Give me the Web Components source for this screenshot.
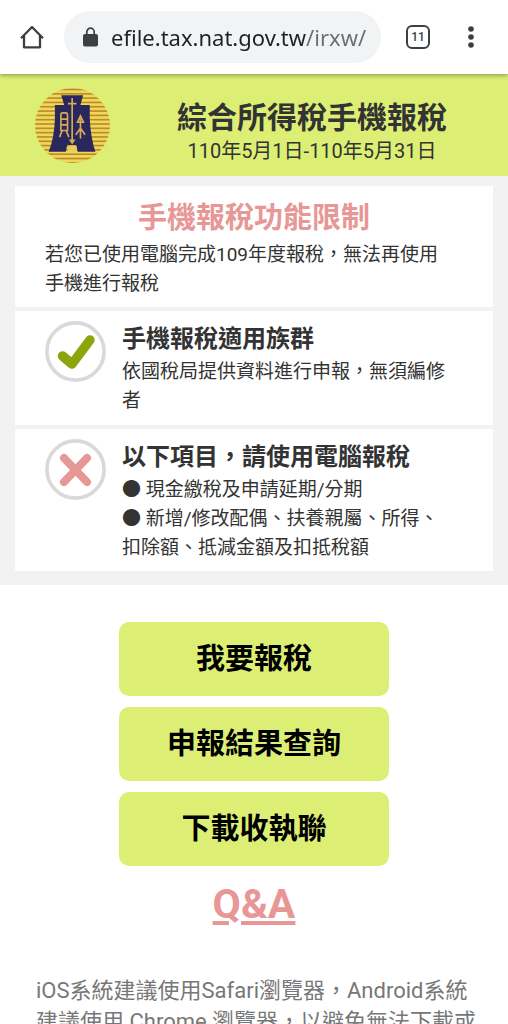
<!DOCTYPE html>
<html lang="zh-Hant-TW">
<head>
<meta charset="utf-8">
<meta name="viewport" content="width=device-width, initial-scale=1">
<title>綜合所得稅手機報稅</title>
<style>
  :root {
    --color-lime: #dcef74;
    --color-pink: #e79796;
    --color-text: #333;
    --color-grey: #f2f2f2;
  }
  body {
    margin: 0;
    background: #fff;
    color: var(--color-text);
    font-family: Roboto, "Noto Sans CJK TC", sans-serif;
    font-size: 19px;
    line-height: 29px;
  }
</style>
</head>
<body>
<phone-shell>
  <address-bar slot="bar" url="efile.tax.nat.gov.tw/irxw/" tabs="11"></address-bar>
  <tax-header>
    <span slot="title">綜合所得稅手機報稅</span>
    <span slot="date">110年5月1日-110年5月31日</span>
  </tax-header>
  <notice-list>
    <notice-card kind="limit">
      <span slot="title">手機報稅功能限制</span>
      若您已使用電腦完成109年度報稅，無法再使用手機進行報稅
    </notice-card>
    <notice-card kind="yes">
      <span slot="title">手機報稅適用族群</span>
      依國稅局提供資料進行申報，無須編修者
    </notice-card>
    <notice-card kind="no">
      <span slot="title">以下項目，請使用電腦報稅</span>
      ● 現金繳稅及申請延期/分期<br>
      ● 新增/修改配偶、扶養親屬、所得、扣除額、抵減金額及扣抵稅額
    </notice-card>
  </notice-list>
  <action-menu>
    <action-button>我要報稅</action-button>
    <action-button>申報結果查詢</action-button>
    <action-button>下載收執聯</action-button>
    <qa-link href="#qa">Q&amp;A</qa-link>
  </action-menu>
  <browser-hint>iOS系統建議使用Safari瀏覽器，Android系統建議使用 Chrome 瀏覽器，以避免無法下載或</browser-hint>
</phone-shell>

<script>
class PhoneShell extends HTMLElement {
  constructor() {
    super();
    this.attachShadow({ mode: 'open' });
  }

  connectedCallback() {
    this.shadowRoot.innerHTML = `
      <style>
        :host {
          display: flex;
          flex-direction: column;
          height: 100vh;
        }
        main {
          flex: 1;
          min-height: 0;
          overflow-y: auto;
          scrollbar-width: none;
        }
      </style>
      <slot name="bar"></slot>
      <main><slot></slot></main>
    `;
  }
}

class AddressBar extends HTMLElement {
  constructor() {
    super();
    this.attachShadow({ mode: 'open' });
  }

  connectedCallback() {
    this.shadowRoot.innerHTML = `
      <style>
        :host {
          display: flex;
          align-items: center;
          box-sizing: border-box;
          height: 74px;
          background: #fff;
          box-shadow: 0 1px 5px rgba(0, 0, 0, 0.4);
          z-index: 1;
        }
        button {
          display: grid;
          place-items: center;
          width: 64px;
          height: 52px;
          padding: 0;
          border: 0;
          background: none;
          color: #3c4043;
        }
        .tabs {
          width: 74px;
        }
        .tabs span {
          box-sizing: border-box;
          width: 24px;
          height: 24px;
          border: 2px solid #3c4043;
          border-radius: 6px;
          font: 500 12px/20px Roboto, sans-serif;
          text-align: center;
        }
        .menu {
          width: 32px;
          margin-right: 21px;
        }
        label {
          flex: 1;
          min-width: 0;
          display: flex;
          align-items: center;
          gap: 12px;
          box-sizing: border-box;
          height: 52px;
          padding: 0 8px 0 18px;
          border-radius: 26px;
          background: #f1f3f4;
        }
        label svg {
          flex: none;
        }
        /* host part dark, path part grey */
        input {
          flex: 1;
          min-width: 0;
          height: 40px;
          padding: 0;
          border: 0;
          outline: 0;
          background: linear-gradient(to right, #202124 195px, #6a6d71 195px);
          -webkit-background-clip: text;
          background-clip: text;
          color: transparent;
          font: 22px "Noto Sans", sans-serif;
        }
      </style>
      <button aria-label="首頁">
        <svg width="26" height="26" viewBox="0 0 26 26" fill="none" stroke="#3c4043" stroke-width="2.3">
          <path d="M2 14.2 13 3 24 14.2M5 12v11.3h16V12" stroke-linejoin="round"/>
        </svg>
      </button>
      <label>
        <svg width="17" height="20" viewBox="0 0 17 20">
          <rect x="1" y="7" width="15" height="12.5" rx="2" fill="#3c4043"/>
          <path d="M4.8 8V4.9a3.7 3.7 0 0 1 7.4 0V8" fill="none" stroke="#3c4043" stroke-width="1.7"/>
        </svg>
        <input type="text" aria-label="網址" readonly value="${this.getAttribute('url')}">
      </label>
      <button class="tabs" aria-label="分頁"><span>${this.getAttribute('tabs')}</span></button>
      <button class="menu" aria-label="選單">
        <svg width="6" height="22" viewBox="0 0 6 22" fill="#3c4043">
          <circle cx="3" cy="3" r="2.8"/><circle cx="3" cy="11" r="2.8"/><circle cx="3" cy="19" r="2.8"/>
        </svg>
      </button>
    `;
  }
}

class TaxHeader extends HTMLElement {
  constructor() {
    super();
    this.attachShadow({ mode: 'open' });
  }

  connectedCallback() {
    let stripes = '';
    for (let y = 37; y < 262; y += 13) {
      stripes += `<rect x="40" y="${y}" width="236" height="5"/>`;
    }
    this.shadowRoot.innerHTML = `
      <style>
        :host {
          display: flex;
          align-items: center;
          gap: 6px;
          box-sizing: border-box;
          min-height: 102px;
          padding-left: 35px;
          background: var(--color-lime);
        }
        svg {
          flex: none;
        }
        .text {
          flex: 1;
          padding-top: 14px;
          text-align: center;
        }
        h1 {
          margin: 0;
          font-size: 30px;
          line-height: 38px;
        }
        p {
          margin: 0;
          font-size: 20px;
          line-height: 29px;
        }
      </style>
      <svg width="75" height="75" viewBox="45 35 226 226" role="img" aria-label="財政部">
        <defs><clipPath id="disc"><circle cx="158" cy="148" r="113"/></clipPath></defs>
        <g clip-path="url(#disc)">
          <rect x="40" y="30" width="236" height="236" fill="#ecd95a"/>
          <g fill="#c08a2c">${stripes}</g>
        </g>
        <path d="M124 57h66l-8 29h28v42q3 60 17 99h-54l-4-20h-27l-4 20H86q17-39 19-99V86h28z" fill="#29285c"/>
        <g fill="none" stroke="#d9a957" stroke-width="5">
          <path d="M157 65v128M144 82h26"/>
          <path d="M123 163v-45q0-8 5-8h10q5 0 5 8v45zM123 129h20M123 146h20M127 163l-8 20M139 163l8 20"/>
          <path d="M182 187v-66M182 119l-9 19h18zM168 176l14-20 14 20"/>
        </g>
        <path d="M147 190h20l-10 15z" fill="#d9a957"/>
        <path d="M146 208h23l4 19h-31z" fill="#e6cd60"/>
      </svg>
      <div class="text">
        <h1><slot name="title"></slot></h1>
        <p><slot name="date"></slot></p>
      </div>
    `;
  }
}

class NoticeList extends HTMLElement {
  constructor() {
    super();
    this.attachShadow({ mode: 'open' });
  }

  connectedCallback() {
    this.shadowRoot.innerHTML = `
      <style>
        :host {
          display: flex;
          flex-direction: column;
          gap: 4px;
          padding: 10px 15px 14px;
          background: var(--color-grey);
        }
      </style>
      <slot></slot>
    `;
  }
}

const noticeIcons = {
  yes: '<path d="M17.5 35l9.5 8 18-24" stroke="#8ba60b" stroke-width="9.5"/>',
  no: '<path d="M19 19l23 24M42 19L19 43" stroke="#e79796" stroke-width="8"/>'
};

class NoticeCard extends HTMLElement {
  constructor() {
    super();
    this.attachShadow({ mode: 'open' });
  }

  connectedCallback() {
    const icon = noticeIcons[this.getAttribute('kind')];
    this.shadowRoot.innerHTML = `
      <style>
        :host {
          display: flex;
          align-items: flex-start;
          gap: 16px;
          padding: 10px 30px 9px;
          background: #fff;
        }
        svg {
          flex: none;
        }
        .text {
          flex: 1;
        }
        .body {
          padding-right: 10px;
        }
        h2 {
          margin: 0;
          font-size: 24px;
          line-height: 36px;
        }
        :host([kind="yes"]) {
          padding-bottom: 10px;
        }
        :host([kind="limit"]) h2 {
          color: var(--color-pink);
          font-size: 29px;
          line-height: 44px;
          text-align: center;
        }
      </style>
      ${icon ? `
      <svg width="61" height="61" viewBox="0 0 61 61" fill="none" stroke-linecap="round" stroke-linejoin="round" aria-hidden="true">
        <circle cx="30.5" cy="30.5" r="28.6" stroke="#d9d9d9" stroke-width="3.6"/>
        ${icon}
      </svg>` : ''}
      <div class="text">
        <h2><slot name="title"></slot></h2>
        <div class="body"><slot></slot></div>
      </div>
    `;
  }
}

class ActionMenu extends HTMLElement {
  constructor() {
    super();
    this.attachShadow({ mode: 'open' });
  }

  connectedCallback() {
    this.shadowRoot.innerHTML = `
      <style>
        :host {
          display: flex;
          flex-direction: column;
          align-items: center;
          gap: 11px;
          padding-top: 37px;
        }
      </style>
      <slot></slot>
    `;
  }
}

class ActionButton extends HTMLElement {
  constructor() {
    super();
    this.attachShadow({ mode: 'open' });
  }

  connectedCallback() {
    this.shadowRoot.innerHTML = `
      <style>
        :host {
          display: block;
          width: 270px;
        }
        button {
          width: 100%;
          height: 74px;
          padding: 0;
          border: 0;
          border-radius: 10px;
          background: var(--color-lime);
          color: #000;
          font: inherit;
          font-size: 29px;
          font-weight: bold;
        }
      </style>
      <button type="button"><slot></slot></button>
    `;
  }
}

class QaLink extends HTMLElement {
  constructor() {
    super();
    this.attachShadow({ mode: 'open' });
  }

  connectedCallback() {
    this.shadowRoot.innerHTML = `
      <style>
        :host {
          display: block;
        }
        a {
          color: var(--color-pink);
          font-size: 41px;
          font-weight: bold;
          line-height: 54px;
        }
      </style>
      <a href="${this.getAttribute('href')}"><slot></slot></a>
    `;
  }
}

class BrowserHint extends HTMLElement {
  constructor() {
    super();
    this.attachShadow({ mode: 'open' });
  }

  connectedCallback() {
    this.shadowRoot.innerHTML = `
      <style>
        :host {
          display: block;
          padding: 44px 28px 0 36px;
          color: #777;
          font-size: 22px;
          line-height: 31px;
        }
      </style>
      <slot></slot>
    `;
  }
}

customElements.define('phone-shell', PhoneShell);
customElements.define('address-bar', AddressBar);
customElements.define('tax-header', TaxHeader);
customElements.define('notice-list', NoticeList);
customElements.define('notice-card', NoticeCard);
customElements.define('action-menu', ActionMenu);
customElements.define('action-button', ActionButton);
customElements.define('qa-link', QaLink);
customElements.define('browser-hint', BrowserHint);
</script>
</body>
</html>
